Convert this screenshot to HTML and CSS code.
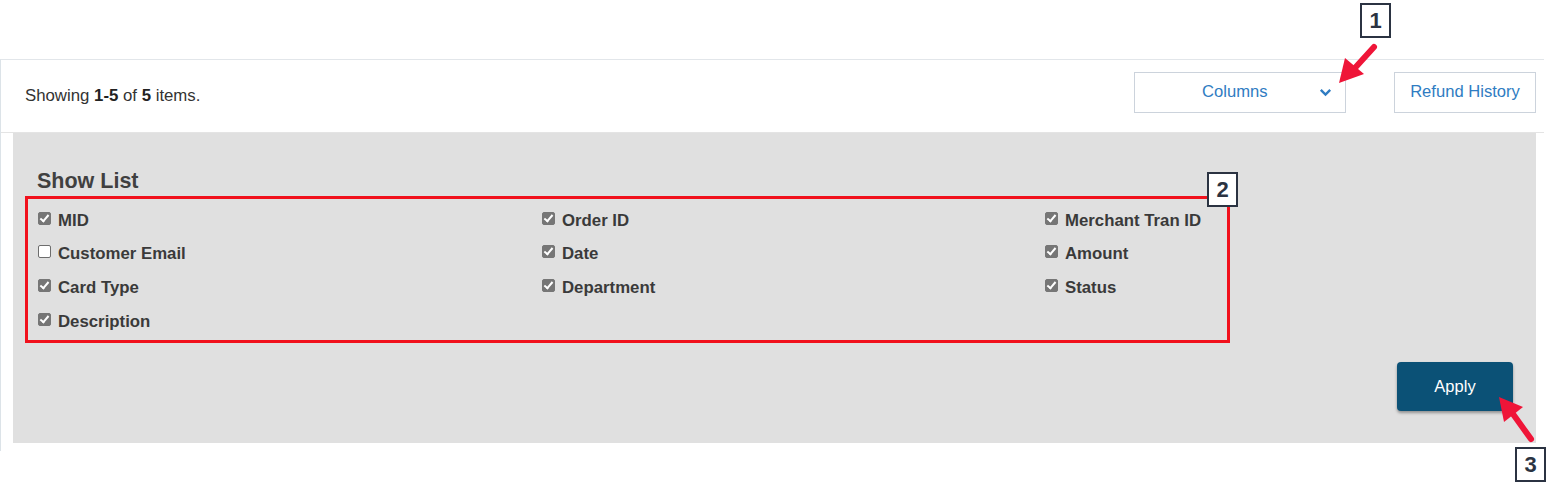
FILE: index.html
```html
<!DOCTYPE html>
<html>
<head>
<meta charset="utf-8">
<link rel="stylesheet" href="styles.css">
</head>
<body>
<div class="page">
  <div class="card">
    <div class="toolbar">
      <div class="summary">Showing <b>1-5</b> of <b>5</b> items.</div>
      <div class="actions">
        <button class="btn-columns"><span class="btn-label">Columns</span>
          <svg class="chev" width="13" height="9" viewBox="0 0 13 9"><path d="M1.8 1.8 L6.5 6.5 L11.2 1.8" fill="none" stroke="#2f7cc2" stroke-width="2.4"/></svg>
        </button>
        <button class="btn-outline">Refund History</button>
      </div>
    </div>
    <div class="panel">
      <h3 class="panel-title">Show List</h3>
      <div class="grid">
        <label class="item"><span class="cb on"></span>MID</label>
        <label class="item"><span class="cb on"></span>Order ID</label>
        <label class="item"><span class="cb on"></span>Merchant Tran ID</label>
        <label class="item"><span class="cb"></span>Customer Email</label>
        <label class="item"><span class="cb on"></span>Date</label>
        <label class="item"><span class="cb on"></span>Amount</label>
        <label class="item"><span class="cb on"></span>Card Type</label>
        <label class="item"><span class="cb on"></span>Department</label>
        <label class="item"><span class="cb on"></span>Status</label>
        <label class="item"><span class="cb on"></span>Description</label>
      </div>
      <div class="panel-foot">
        <button class="btn-apply">Apply</button>
      </div>
    </div>
  </div>

  <div class="hl-box"></div>
  <div class="tag tag1">1</div>
  <div class="tag tag2">2</div>
  <div class="tag tag3">3</div>
  <svg class="arrow arrow1" width="50" height="50" viewBox="0 0 50 50">
    <line x1="40" y1="5" x2="20" y2="27" stroke="#ef1538" stroke-width="6" stroke-linecap="round"/>
    <polygon points="5,41 11,16 30,32" fill="#ef1538"/>
  </svg>
  <svg class="arrow arrow3" width="50" height="56" viewBox="0 0 50 56">
    <line x1="40" y1="47" x2="22" y2="22" stroke="#ef1538" stroke-width="6" stroke-linecap="round"/>
    <polygon points="8,5 32,15 13,30" fill="#ef1538"/>
  </svg>
</div>
</body>
</html>
```
FILE: styles.css
```css
* { box-sizing: border-box; }
html, body { margin: 0; padding: 0; background: #fff; }
body { font-family: "Liberation Sans", Arial, sans-serif; color: #333; }

.page { position: relative; width: 1549px; height: 483px; padding-top: 59px; }

.card {
  width: 1544px;
  height: 392px;
  border-top: 1px solid #e2e6ea;
  border-left: 1px solid #dce3e8;
}

.toolbar {
  height: 73px;
  display: flex;
  align-items: center;
  justify-content: space-between;
  border-bottom: 1px solid #e4e4e4;
  padding-left: 24px;
  padding-right: 8px;
}
.summary { font-size: 16.8px; color: #333; margin-top: 0px; }
.summary b { color: #222; }

.actions { display: flex; align-items: center; gap: 48px; margin-top: -8px; }

.btn-columns, .btn-outline {
  height: 41px;
  background: #fff;
  border: 1px solid #ccd3dc;
  font-family: "Liberation Sans", Arial, sans-serif;
  font-size: 16.6px;
  color: #2f7cc2;
  border-radius: 0;
}
.btn-columns {
  width: 212px;
  display: flex;
  align-items: center;
  padding: 0 13px 0 67px;
}
.btn-label { flex: 1; text-align: left; }
.chev { display: block; margin-top: 1px; }
.btn-outline { width: 142px; padding: 0; }

.panel {
  margin-left: 12px;
  margin-right: 8px;
  height: 310px;
  background: #e0e0e0;
  padding: 36px 23px 0 24px;
}
.panel-title {
  margin: 0;
  font-size: 21.5px;
  line-height: 24px;
  font-weight: bold;
  color: #404040;
}
.grid {
  margin-top: 11px;
  display: grid;
  grid-template-columns: 504px 503px auto;
  grid-auto-rows: 33.6px;
  padding-left: 1px;
}
.item {
  display: flex;
  align-items: center;
  font-size: 16.8px;
  font-weight: bold;
  color: #3a3a3a;
}
.cb {
  width: 13px;
  height: 13px;
  border-radius: 2px;
  margin-right: 7px;
  margin-top: -5px;
  background: #fff;
  border: 1px solid #6d6d6d;
  position: relative;
}
.cb.on { background: #767676; border-color: #767676; }
.cb.on::after {
  content: "";
  position: absolute;
  left: 3px;
  top: 0px;
  width: 3px;
  height: 7px;
  border: solid #fff;
  border-width: 0 2px 2px 0;
  transform: rotate(40deg);
}

.panel-foot { display: flex; justify-content: flex-end; margin-top: 24px; }
.btn-apply {
  width: 116px;
  height: 49px;
  background: #0b5176;
  color: #fff;
  border: none;
  border-radius: 4px;
  font-family: "Liberation Sans", Arial, sans-serif;
  font-size: 16.5px;
  box-shadow: 0 2px 3px rgba(0,0,0,0.35);
}

.hl-box {
  position: absolute;
  left: 25px;
  top: 196px;
  width: 1205px;
  height: 147px;
  border: 3px solid #f1111c;
}
.tag {
  position: absolute;
  width: 31px;
  height: 35px;
  background: #fff;
  border: 2px solid #2b3342;
  font-size: 22px;
  font-weight: bold;
  color: #2b3342;
  display: flex;
  align-items: center;
  justify-content: center;
}
.tag1 { left: 1360px; top: 3px; }
.tag2 { left: 1207px; top: 172px; }
.tag3 { left: 1515px; top: 447px; }
.arrow { position: absolute; }
.arrow1 { left: 1334px; top: 42px; }
.arrow3 { left: 1491px; top: 392px; }
```
